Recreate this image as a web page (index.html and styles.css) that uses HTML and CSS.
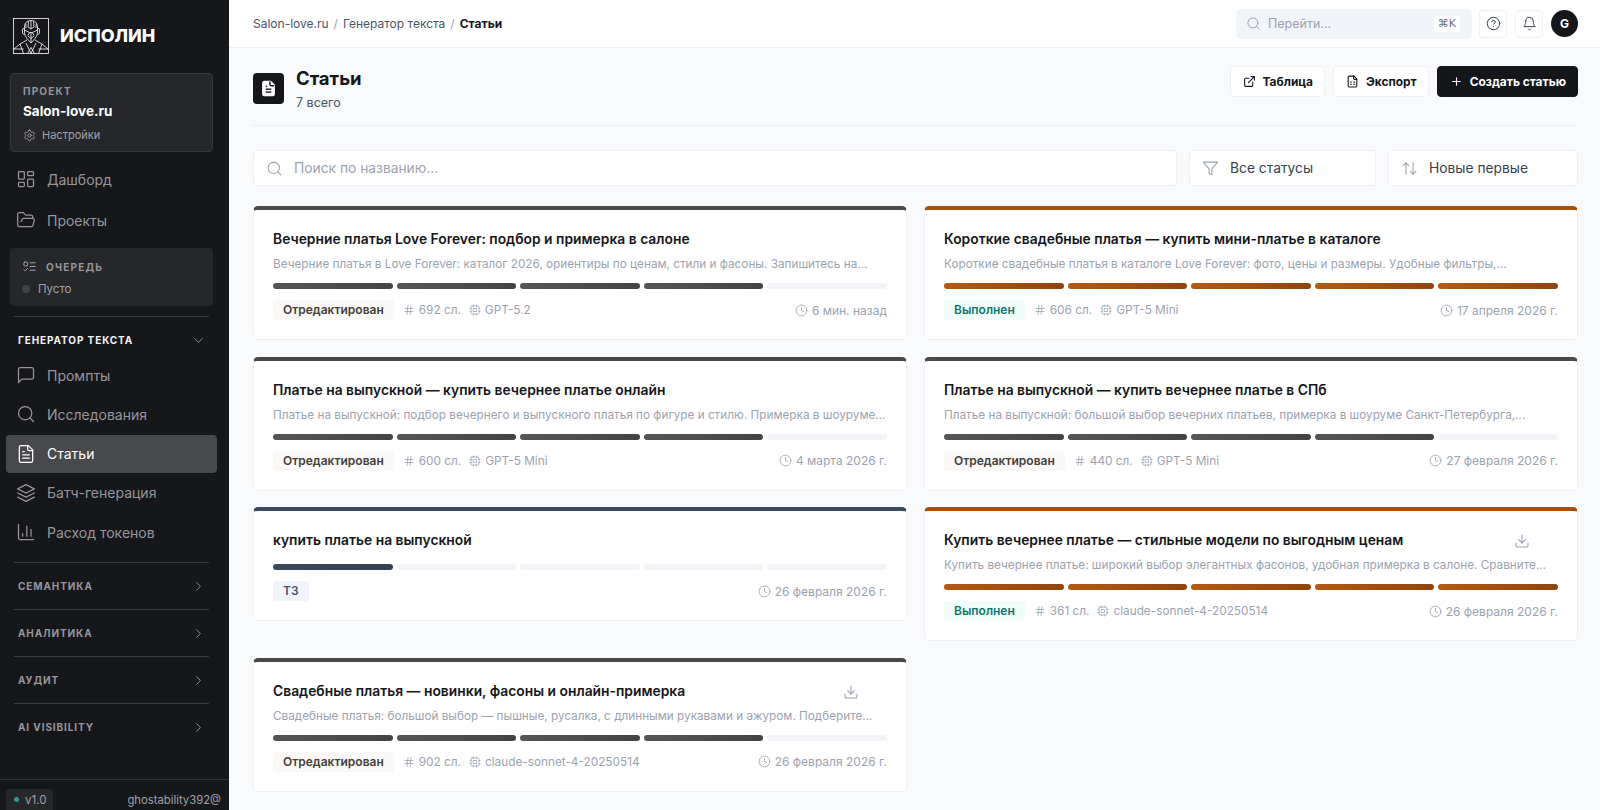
FILE: index.html
```html
<!DOCTYPE html>
<html lang="ru">

<head>
    <meta charset="utf-8">
    <title>Статьи</title>
    <link rel="stylesheet" href="styles.css">
</head>

<body>
    <svg class="sprite" xmlns="http://www.w3.org/2000/svg">
        <symbol id="i-gear" viewBox="0 0 24 24"><path d="M12.22 2h-.44a2 2 0 0 0-2 2v.18a2 2 0 0 1-1 1.73l-.43.25a2 2 0 0 1-2 0l-.15-.08a2 2 0 0 0-2.73.73l-.22.38a2 2 0 0 0 .73 2.73l.15.1a2 2 0 0 1 1 1.72v.51a2 2 0 0 1-1 1.74l-.15.09a2 2 0 0 0-.73 2.73l.22.38a2 2 0 0 0 2.73.73l.15-.08a2 2 0 0 1 2 0l.43.25a2 2 0 0 1 1 1.73V20a2 2 0 0 0 2 2h.44a2 2 0 0 0 2-2v-.18a2 2 0 0 1 1-1.73l.43-.25a2 2 0 0 1 2 0l.15.08a2 2 0 0 0 2.73-.73l.22-.39a2 2 0 0 0-.73-2.73l-.15-.08a2 2 0 0 1-1-1.74v-.5a2 2 0 0 1 1-1.74l.15-.09a2 2 0 0 0 .73-2.73l-.22-.38a2 2 0 0 0-2.73-.73l-.15.08a2 2 0 0 1-2 0l-.43-.25a2 2 0 0 1-1-1.73V4a2 2 0 0 0-2-2z"/><circle cx="12" cy="12" r="3"/></symbol>
        <symbol id="i-dash" viewBox="0 0 24 24"><rect x="3" y="3" width="7" height="9" rx="1"/><rect x="14" y="3" width="7" height="5" rx="1"/><rect x="14" y="12" width="7" height="9" rx="1"/><rect x="3" y="16" width="7" height="5" rx="1"/></symbol>
        <symbol id="i-folder" viewBox="0 0 24 24"><path d="m6 14 1.5-2.9A2 2 0 0 1 9.24 10H20a2 2 0 0 1 1.94 2.5l-1.54 6a2 2 0 0 1-1.95 1.5H4a2 2 0 0 1-2-2V5a2 2 0 0 1 2-2h3.9a2 2 0 0 1 1.69.9l.81 1.2a2 2 0 0 0 1.67.9H18a2 2 0 0 1 2 2v2"/></symbol>
        <symbol id="i-todo" viewBox="0 0 24 24"><rect x="3" y="5" width="6" height="6" rx="1"/><path d="m3 17 2 2 4-4"/><path d="M13 6h8"/><path d="M13 12h8"/><path d="M13 18h8"/></symbol>
        <symbol id="i-message" viewBox="0 0 24 24"><path d="M21 15a2 2 0 0 1-2 2H7l-4 4V5a2 2 0 0 1 2-2h14a2 2 0 0 1 2 2z"/></symbol>
        <symbol id="i-search" viewBox="0 0 24 24"><circle cx="11" cy="11" r="8"/><path d="m21 21-4.3-4.3"/></symbol>
        <symbol id="i-file" viewBox="0 0 24 24"><path d="M15 2H6a2 2 0 0 0-2 2v16a2 2 0 0 0 2 2h12a2 2 0 0 0 2-2V7Z"/><path d="M14 2v4a2 2 0 0 0 2 2h4"/><path d="M10 9H8"/><path d="M16 13H8"/><path d="M16 17H8"/></symbol>
        <symbol id="i-layers" viewBox="0 0 24 24"><path d="M12 2 2 7l10 5 10-5-10-5z"/><path d="m2 17 10 5 10-5"/><path d="m2 12 10 5 10-5"/></symbol>
        <symbol id="i-chart" viewBox="0 0 24 24"><path d="M3 3v16a2 2 0 0 0 2 2h16"/><path d="M18 17V9"/><path d="M13 17V5"/><path d="M8 17v-3"/></symbol>
        <symbol id="i-down" viewBox="0 0 24 24"><path d="m6 9 6 6 6-6"/></symbol>
        <symbol id="i-right" viewBox="0 0 24 24"><path d="m9 18 6-6-6-6"/></symbol>
        <symbol id="i-help" viewBox="0 0 24 24"><circle cx="12" cy="12" r="10"/><path d="M9.09 9a3 3 0 0 1 5.83 1c0 2-3 3-3 3"/><path d="M12 17h.01"/></symbol>
        <symbol id="i-bell" viewBox="0 0 24 24"><path d="M6 8a6 6 0 0 1 12 0c0 7 3 9 3 9H3s3-2 3-9"/><path d="M10.3 21a1.94 1.94 0 0 0 3.4 0"/></symbol>
        <symbol id="i-link" viewBox="0 0 24 24"><path d="M15 3h6v6"/><path d="M10 14 21 3"/><path d="M18 13v6a2 2 0 0 1-2 2H5a2 2 0 0 1-2-2V8a2 2 0 0 1 2-2h6"/></symbol>
        <symbol id="i-sheet" viewBox="0 0 24 24"><path d="M15 2H6a2 2 0 0 0-2 2v16a2 2 0 0 0 2 2h12a2 2 0 0 0 2-2V7Z"/><path d="M14 2v4a2 2 0 0 0 2 2h4"/><path d="M8 13h2"/><path d="M14 13h2"/><path d="M8 17h2"/><path d="M14 17h2"/></symbol>
        <symbol id="i-plus" viewBox="0 0 24 24"><path d="M5 12h14"/><path d="M12 5v14"/></symbol>
        <symbol id="i-filter" viewBox="0 0 24 24"><polygon points="22 3 2 3 10 12.46 10 19 14 21 14 12.46 22 3"/></symbol>
        <symbol id="i-sort" viewBox="0 0 24 24"><path d="m21 16-4 4-4-4"/><path d="M17 20V4"/><path d="m3 8 4-4 4 4"/><path d="M7 4v16"/></symbol>
        <symbol id="i-hash" viewBox="0 0 24 24"><path d="M4 9h16"/><path d="M4 15h16"/><path d="M10 3 8 21"/><path d="M16 3l-2 18"/></symbol>
        <symbol id="i-cpu" viewBox="0 0 24 24"><rect x="4" y="4" width="16" height="16" rx="2"/><rect x="9" y="9" width="6" height="6"/><path d="M15 2v2M9 2v2M15 20v2M9 20v2M2 15h2M2 9h2M20 15h2M20 9h2"/></symbol>
        <symbol id="i-clock" viewBox="0 0 24 24"><circle cx="12" cy="12" r="10"/><polyline points="12 6 12 12 16 14"/></symbol>
        <symbol id="i-save" viewBox="0 0 24 24"><path d="M21 15v4a2 2 0 0 1-2 2H5a2 2 0 0 1-2-2v-4"/><path d="m7 10 5 5 5-5"/><path d="M12 15V3"/></symbol>
    </svg>

    <div class="app">
        <aside class="sidebar">
            <div class="brand">
                <svg class="logo" viewBox="0 0 36 36" fill="none" stroke="#fff" stroke-width="0.8">
                    <rect x="0.5" y="0.5" width="35" height="35"/>
                    <!-- helmet -->
                    <path d="M18 2.5c-4 0-6.500 2.500-6.500 6.500v5c0 2.500 1 4.500 2.500 6.500l4 4.500 4-4.500c1.500-2 2.500-4 2.500-6.500V9c0-4-2.500-6.500-6.500-6.500z"/>
                    <path d="M15.500 3.200 15 9l3 2 3-2-.5-5.800M18 2.500V11M12.800 5.500 13 10M23.200 5.500 23 10"/>
                    <path d="M11.500 12l5 2.500-1.500 3M24.500 12l-5 2.500 1.500 3M16.500 14.500h3M18 14.500V24.500M15 18l3 2.500 3-2.500"/>
                    <path d="M11.500 10l-2 1v4l2 2M24.500 10l2 1v4l-2 2"/>
                    <!-- shoulders -->
                    <path d="M14 22l-7 4-6 5M22 22l7 4 6 5M7 26l3.500 9.500M29 26l-3.500 9.500M1 31l9.500 0M35 31l-9.500 0M13 25l5 10.500L23 25M14.500 35.500l3.500-6 3.500 6"/>
                </svg>
                <span class="brand-name">ИСПОЛИН</span>
            </div>

            <div class="project-card">
                <div class="side-label">ПРОЕКТ</div>
                <div class="project-name">Salon-love.ru</div>
                <div class="project-link"><svg class="icon"><use href="#i-gear"/></svg>Настройки</div>
            </div>

            <nav class="nav nav-top">
                <a class="nav-item"><svg class="icon"><use href="#i-dash"/></svg>Дашборд</a>
                <a class="nav-item"><svg class="icon"><use href="#i-folder"/></svg>Проекты</a>
            </nav>

            <div class="queue-card">
                <div class="queue-head"><svg class="icon"><use href="#i-todo"/></svg><span class="side-label">ОЧЕРЕДЬ</span></div>
                <div class="queue-state"><span class="queue-dot"></span>Пусто</div>
            </div>

            <div class="group group-open">
                <div class="group-head">ГЕНЕРАТОР ТЕКСТА<svg class="icon"><use href="#i-down"/></svg></div>
                <nav class="nav">
                    <a class="nav-item"><svg class="icon"><use href="#i-message"/></svg>Промпты</a>
                    <a class="nav-item"><svg class="icon"><use href="#i-search"/></svg>Исследования</a>
                    <a class="nav-item active"><svg class="icon"><use href="#i-file"/></svg>Статьи</a>
                    <a class="nav-item"><svg class="icon"><use href="#i-layers"/></svg>Батч-генерация</a>
                    <a class="nav-item"><svg class="icon"><use href="#i-chart"/></svg>Расход токенов</a>
                </nav>
            </div>

            <div class="group"><div class="group-head">СЕМАНТИКА<svg class="icon"><use href="#i-right"/></svg></div></div>
            <div class="group"><div class="group-head">АНАЛИТИКА<svg class="icon"><use href="#i-right"/></svg></div></div>
            <div class="group"><div class="group-head">АУДИТ<svg class="icon"><use href="#i-right"/></svg></div></div>
            <div class="group"><div class="group-head">AI VISIBILITY<svg class="icon"><use href="#i-right"/></svg></div></div>

            <div class="side-footer">
                <span class="version"><span class="version-dot"></span>v1.0</span>
                <span class="user-name">ghostability392@</span>
            </div>
        </aside>

        <div class="page">
            <header class="topbar">
                <div class="crumbs">
                    <span>Salon-love.ru</span><span class="sep">/</span><span>Генератор текста</span><span class="sep">/</span><b>Статьи</b>
                </div>
                <div class="top-actions">
                    <div class="jump"><svg class="icon"><use href="#i-search"/></svg><span class="jump-text">Перейти...</span><kbd>⌘K</kbd></div>
                    <button class="icon-btn"><svg class="icon"><use href="#i-help"/></svg></button>
                    <button class="icon-btn"><svg class="icon"><use href="#i-bell"/></svg></button>
                    <div class="avatar">G</div>
                </div>
            </header>

            <main class="content">
                <div class="page-head">
                    <div class="page-icon"><svg viewBox="0 0 24 24"><path class="page-icon-fill" d="M15 2H6a2 2 0 0 0-2 2v16a2 2 0 0 0 2 2h12a2 2 0 0 0 2-2V7Z"/><path d="M14 2v4a2 2 0 0 0 2 2h4"/><path d="M10 9H8"/><path d="M16 13H8"/><path d="M16 17H8"/></svg></div>
                    <div class="page-title">
                        <h1>Статьи</h1>
                        <div class="page-count">7 всего</div>
                    </div>
                    <div class="page-buttons">
                        <button class="btn"><svg class="icon"><use href="#i-link"/></svg>Таблица</button>
                        <button class="btn"><svg class="icon"><use href="#i-sheet"/></svg>Экспорт</button>
                        <button class="btn btn-dark"><svg class="icon"><use href="#i-plus"/></svg>Создать статью</button>
                    </div>
                </div>

                <div class="filters">
                    <div class="field field-search"><svg class="icon"><use href="#i-search"/></svg><span class="placeholder">Поиск по названию...</span></div>
                    <div class="field field-status"><svg class="icon"><use href="#i-filter"/></svg>Все статусы</div>
                    <div class="field field-sort"><svg class="icon"><use href="#i-sort"/></svg>Новые первые</div>
                </div>

                <div class="cards">
                    <article class="card grey">
                        <h2>Вечерние платья Love Forever: подбор и примерка в салоне</h2>
                        <p>Вечерние платья в Love Forever: каталог 2026, ориентиры по ценам, стили и фасоны. Запишитесь на...</p>
                        <div class="bars"><i class="on"></i><i class="on"></i><i class="on"></i><i class="on"></i><i></i></div>
                        <div class="meta"><span class="badge">Отредактирован</span><span class="stat"><svg class="icon"><use href="#i-hash"/></svg>692 сл.</span><span class="stat"><svg class="icon"><use href="#i-cpu"/></svg>GPT-5.2</span><span class="stat date"><svg class="icon"><use href="#i-clock"/></svg>6 мин. назад</span></div>
                    </article>

                    <article class="card orange">
                        <h2>Короткие свадебные платья — купить мини-платье в каталоге</h2>
                        <p>Короткие свадебные платья в каталоге Love Forever: фото, цены и размеры. Удобные фильтры,...</p>
                        <div class="bars"><i class="on"></i><i class="on"></i><i class="on"></i><i class="on"></i><i class="on"></i></div>
                        <div class="meta"><span class="badge badge-done">Выполнен</span><span class="stat"><svg class="icon"><use href="#i-hash"/></svg>606 сл.</span><span class="stat"><svg class="icon"><use href="#i-cpu"/></svg>GPT-5 Mini</span><span class="stat date"><svg class="icon"><use href="#i-clock"/></svg>17 апреля 2026 г.</span></div>
                    </article>

                    <article class="card grey">
                        <h2>Платье на выпускной — купить вечернее платье онлайн</h2>
                        <p>Платье на выпускной: подбор вечернего и выпускного платья по фигуре и стилю. Примерка в шоуруме...</p>
                        <div class="bars"><i class="on"></i><i class="on"></i><i class="on"></i><i class="on"></i><i></i></div>
                        <div class="meta"><span class="badge">Отредактирован</span><span class="stat"><svg class="icon"><use href="#i-hash"/></svg>600 сл.</span><span class="stat"><svg class="icon"><use href="#i-cpu"/></svg>GPT-5 Mini</span><span class="stat date"><svg class="icon"><use href="#i-clock"/></svg>4 марта 2026 г.</span></div>
                    </article>

                    <article class="card grey">
                        <h2>Платье на выпускной — купить вечернее платье в СПб</h2>
                        <p>Платье на выпускной: большой выбор вечерних платьев, примерка в шоуруме Санкт-Петербурга,...</p>
                        <div class="bars"><i class="on"></i><i class="on"></i><i class="on"></i><i class="on"></i><i></i></div>
                        <div class="meta"><span class="badge">Отредактирован</span><span class="stat"><svg class="icon"><use href="#i-hash"/></svg>440 сл.</span><span class="stat"><svg class="icon"><use href="#i-cpu"/></svg>GPT-5 Mini</span><span class="stat date"><svg class="icon"><use href="#i-clock"/></svg>27 февраля 2026 г.</span></div>
                    </article>

                    <article class="card slate">
                        <h2>купить платье на выпускной</h2>
                        <div class="bars"><i class="on"></i><i></i><i></i><i></i><i></i></div>
                        <div class="meta"><span class="badge badge-tz">ТЗ</span><span class="stat date"><svg class="icon"><use href="#i-clock"/></svg>26 февраля 2026 г.</span></div>
                    </article>

                    <article class="card orange">
                        <div class="title-row"><h2>Купить вечернее платье — стильные модели по выгодным ценам</h2><svg class="icon save"><use href="#i-save"/></svg></div>
                        <p>Купить вечернее платье: широкий выбор элегантных фасонов, удобная примерка в салоне. Сравните...</p>
                        <div class="bars"><i class="on"></i><i class="on"></i><i class="on"></i><i class="on"></i><i class="on"></i></div>
                        <div class="meta"><span class="badge badge-done">Выполнен</span><span class="stat"><svg class="icon"><use href="#i-hash"/></svg>361 сл.</span><span class="stat"><svg class="icon"><use href="#i-cpu"/></svg>claude-sonnet-4-20250514</span><span class="stat date"><svg class="icon"><use href="#i-clock"/></svg>26 февраля 2026 г.</span></div>
                    </article>

                    <article class="card grey">
                        <div class="title-row"><h2>Свадебные платья — новинки, фасоны и онлайн-примерка</h2><svg class="icon save"><use href="#i-save"/></svg></div>
                        <p>Свадебные платья: большой выбор — пышные, русалка, с длинными рукавами и ажуром. Подберите...</p>
                        <div class="bars"><i class="on"></i><i class="on"></i><i class="on"></i><i class="on"></i><i></i></div>
                        <div class="meta"><span class="badge">Отредактирован</span><span class="stat"><svg class="icon"><use href="#i-hash"/></svg>902 сл.</span><span class="stat"><svg class="icon"><use href="#i-cpu"/></svg>claude-sonnet-4-20250514</span><span class="stat date"><svg class="icon"><use href="#i-clock"/></svg>26 февраля 2026 г.</span></div>
                    </article>
                </div>
            </main>
        </div>
    </div>
</body>

</html>
```

FILE: styles.css
```css
* {
    box-sizing: border-box;
}

body {
    margin: 0;
    height: 810px;
    overflow: hidden;
    font-family: Inter, "Noto Sans", sans-serif;
    background-color: #f8fafc;
    color: #15161a;
}

.sprite {
    display: none;
}

.icon {
    width: 16px;
    height: 16px;
    flex: none;
    fill: none;
    stroke: currentColor;
    stroke-width: 2;
    stroke-linecap: round;
    stroke-linejoin: round;
}

.app {
    display: flex;
    height: 810px;
}

/* sidebar */
.sidebar {
    width: 229px;
    flex: none;
    display: flex;
    flex-direction: column;
    background-color: #16171b;
    color: #a1a1a6;
}

.brand {
    display: flex;
    align-items: flex-start;
    gap: 11px;
    height: 73px;
    padding: 18px 13px 0;
}

.logo {
    width: 36px;
    height: 36px;
}

.brand-name {
    color: #ffffff;
    font-size: 18px;
    font-weight: 800;
    line-height: 36px;
}

.project-card {
    margin: 0 16px 0 10px;
    height: 79px;
    padding: 10px 12px;
    background-color: #26272b;
    border: 1px solid #35363a;
    border-radius: 4px;
}

.side-label {
    font-size: 10px;
    font-weight: 700;
    letter-spacing: 1.2px;
    line-height: 14px;
    color: #96969b;
}

.project-name {
    margin-top: 4px;
    color: #ffffff;
    font-size: 13.5px;
    font-weight: 700;
    line-height: 18px;
}

.project-link {
    display: flex;
    align-items: center;
    gap: 6px;
    margin-top: 6px;
    font-size: 11px;
    line-height: 18px;
}

.project-link .icon {
    width: 13px;
    height: 13px;
    stroke-width: 1.7;
}

.nav {
    display: flex;
    flex-direction: column;
    gap: 1.3px;
}

.nav-top {
    margin-top: 8px;
    gap: 3px;
}

.nav-item {
    display: flex;
    align-items: center;
    gap: 11px;
    height: 38px;
    margin: 0 12px 0 6px;
    padding: 0 10px;
    border-radius: 4px;
    font-size: 14px;
    color: #96969b;
}

.nav-item .icon {
    width: 20px;
    height: 20px;
    stroke-width: 1.5;
}

.nav-item.active {
    background-color: #48494c;
    color: #ffffff;
}

.queue-card {
    margin: 9px 16px 10px 10px;
    height: 58px;
    padding: 11px 12px;
    background-color: #26272b;
    border-radius: 4px;
}

.queue-head {
    display: flex;
    align-items: center;
    gap: 9px;
}

.queue-head .icon {
    width: 15px;
    height: 15px;
    stroke-width: 1.6;
}

.queue-state {
    display: flex;
    align-items: center;
    gap: 8px;
    margin-top: 7px;
    font-size: 11.5px;
    line-height: 16px;
}

.queue-dot {
    width: 8px;
    height: 8px;
    border-radius: 50%;
    background-color: #414246;
}

.group {
    margin: 0 20px 0 14px;
    border-top: 1px solid #3a3b3f;
}

.group-head {
    display: flex;
    align-items: center;
    justify-content: space-between;
    height: 46px;
    padding: 0 3px 0 4px;
    font-size: 10px;
    font-weight: 700;
    letter-spacing: 0.9px;
    color: #96969b;
}

.group-head .icon {
    width: 15px;
    height: 15px;
    stroke-width: 1.5;
}

.group-open {
    padding-bottom: 11px;
}

.group-open .group-head {
    color: #f4f4f5;
}

.group-open .group-head .icon {
    color: #96969b;
}

.group-open .nav {
    margin: -7px -20px 0 -14px;
}

.side-footer {
    display: flex;
    align-items: center;
    justify-content: space-between;
    margin-top: auto;
    height: 31px;
    padding: 0 8px 0 6px;
    border-top: 1px solid #2d2e32;
}

.version {
    display: flex;
    align-items: center;
    gap: 6px;
    height: 21px;
    margin-top: 9px;
    padding: 0 7px 0 8px;
    background-color: #26272b;
    border-radius: 3px 3px 0 0;
    font-size: 11.5px;
}

.version-dot {
    width: 5px;
    height: 5px;
    border-radius: 50%;
    background-color: #2a9d84;
}

.user-name {
    margin-top: 9px;
    font-size: 11.3px;
}

/* top bar */
.page {
    flex: 1;
    min-width: 0;
}

.topbar {
    display: flex;
    align-items: center;
    justify-content: space-between;
    height: 48px;
    padding: 0 22px 0 24px;
    background-color: #ffffff;
    border-bottom: 1px solid #eef0f3;
}

.crumbs {
    display: flex;
    align-items: center;
    gap: 5px;
    font-size: 12px;
    color: #4b5563;
}

.crumbs .sep {
    color: #9ca3af;
}

.crumbs b {
    color: #15161a;
    font-weight: 700;
}

.top-actions {
    display: flex;
    align-items: center;
    gap: 8px;
}

.jump {
    display: flex;
    align-items: center;
    gap: 7px;
    width: 236px;
    height: 30px;
    margin-right: -1px;
    padding: 0 12px 0 10px;
    background-color: #f1f4f9;
    border-radius: 5px;
    font-size: 12.5px;
    color: #9ca3af;
}

.jump .icon {
    width: 15px;
    height: 15px;
    stroke-width: 1.6;
}

.jump-text {
    flex: 1;
}

kbd {
    padding: 1px 4px;
    background-color: #ffffff;
    border-radius: 2px;
    font-family: "DejaVu Sans", sans-serif;
    font-size: 11px;
    line-height: 14px;
    color: #6b7280;
}

.icon-btn {
    display: flex;
    align-items: center;
    justify-content: center;
    width: 28px;
    height: 28px;
    padding: 0;
    background-color: #ffffff;
    border: 1px solid #eef0f3;
    border-radius: 4px;
    color: #374151;
}

.icon-btn .icon {
    width: 15px;
    height: 15px;
    stroke-width: 1.6;
}

.avatar {
    display: flex;
    align-items: center;
    justify-content: center;
    width: 27px;
    height: 27px;
    border-radius: 50%;
    background-color: #15161a;
    color: #ffffff;
    font-size: 12px;
    font-weight: 700;
}

/* content */
.content {
    padding: 18px 22px 0 24px;
}

.page-head {
    display: flex;
    align-items: flex-start;
    height: 60px;
    border-bottom: 1px solid #eceef1;
}

.page-icon {
    display: flex;
    align-items: center;
    justify-content: center;
    width: 31px;
    height: 31px;
    margin-top: 7px;
    border-radius: 4px;
    background-color: #15161a;
}

.page-icon svg {
    width: 17px;
    height: 17px;
    fill: none;
    stroke: #15161a;
    stroke-width: 2;
}

.page-icon-fill {
    fill: #ffffff;
    stroke: #ffffff;
}

.page-title {
    margin-left: 12px;
}

h1 {
    margin: 0;
    font-size: 18.5px;
    font-weight: 700;
    line-height: 24px;
}

.page-count {
    margin-top: 5px;
    font-size: 12.5px;
    line-height: 16px;
    color: #4b5563;
}

.page-buttons {
    display: flex;
    gap: 8px;
    margin-left: auto;
}

.btn {
    display: flex;
    align-items: center;
    gap: 7px;
    height: 31px;
    padding: 0 11px 0 12px;
    background-color: #ffffff;
    border: 1px solid #eef0f3;
    border-radius: 4px;
    font-family: inherit;
    font-size: 11.9px;
    font-weight: 700;
    color: #15161a;
}

.btn .icon {
    width: 13px;
    height: 13px;
}

.btn-dark {
    background-color: #15161a;
    border-color: #15161a;
    color: #ffffff;
}

.filters {
    display: flex;
    gap: 12px;
    margin-top: 24px;
}

.field {
    display: flex;
    align-items: center;
    gap: 11px;
    height: 36px;
    padding: 0 12px;
    background-color: #ffffff;
    border: 1px solid #eef0f3;
    border-radius: 4px;
    font-size: 13.8px;
    color: #374151;
}

.field .icon {
    width: 17px;
    height: 17px;
    color: #9ca3af;
    stroke-width: 1.5;
}

.field-search {
    flex: 1;
}

.field-status {
    width: 187px;
}

.field-sort {
    width: 190px;
}

.placeholder {
    color: #9ca3af;
}

.cards {
    display: grid;
    grid-template-columns: 1fr 1fr;
    gap: 16.5px 17px;
    align-items: start;
    margin-top: 20px;
}

.card {
    min-width: 0;
    height: 134px;
    padding: 19px 19px 0;
    background-color: #ffffff;
    border: 1px solid #eef0f3;
    border-top: 4px solid #4a4a48;
    border-radius: 5px;
}

.card.orange {
    border-top-color: #a6500f;
}

.card.slate {
    height: 114px;
    border-top-color: #3b4a5f;
}

h2 {
    margin: 0;
    font-size: 13.85px;
    font-weight: 600;
    line-height: 20px;
    white-space: nowrap;
}

.title-row {
    display: flex;
    align-items: center;
    justify-content: space-between;
    padding-right: 28px;
}

.save {
    width: 16px;
    height: 16px;
    margin-top: 2px;
    color: #9ca3af;
    stroke-width: 1.6;
}

.card p {
    margin: 7px 0 0;
    font-size: 11.75px;
    line-height: 16px;
    color: #9ca3af;
    white-space: nowrap;
    overflow: hidden;
}

.bars {
    display: grid;
    grid-template-columns: repeat(5, 1fr);
    gap: 4px;
    margin-top: 11px;
}

.slate .bars {
    margin-top: 14px;
}

.bars i {
    height: 6px;
    border-radius: 3px;
    background-color: #f3f4f8;
}

.grey .bars .on {
    background-image: linear-gradient(90deg, #555553, #444442);
}

.orange .bars .on {
    background-image: linear-gradient(90deg, #b45a12, #8f4510);
}

.slate .bars .on {
    background-image: linear-gradient(90deg, #3b4a5f, #334155);
}

.meta {
    display: flex;
    align-items: center;
    gap: 8px;
    margin-top: 11px;
    font-size: 11.8px;
    color: #9ca3af;
}

.badge {
    height: 20px;
    margin-right: 1px;
    padding: 0 10px;
    line-height: 20px;
    background-color: #faf9f8;
    border-radius: 3px;
    font-size: 12px;
    font-weight: 600;
    color: #44403c;
}

.badge-done {
    background-color: #f0fdfa;
    color: #0f766e;
}

.badge-tz {
    background-color: #f1f5f9;
    color: #475569;
}

.stat {
    display: flex;
    align-items: center;
    gap: 4px;
}

.stat .icon {
    width: 12px;
    height: 12px;
    stroke-width: 1.6;
}

.date {
    margin-left: auto;
    font-size: 12px;
}

.date .icon {
    width: 13px;
    height: 13px;
}
```
